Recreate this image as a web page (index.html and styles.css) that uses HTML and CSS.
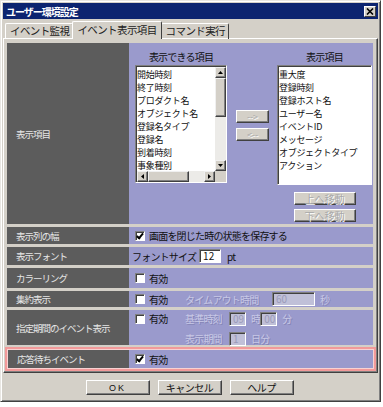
FILE: index.html
```html
<!DOCTYPE html>
<html>
<head lang="ja">
    <meta charset="UTF-8">
    <title>ユーザー環境設定</title>
    <link rel="stylesheet" href="styles.css">
</head>
<body>
<div class="window">
    <div class="titlebar">
        <span class="title">ユーザー環境設定</span>
        <span class="close">
            <svg width="8" height="7" viewBox="0 0 8 7"><path d="M1 0.5 L7 6.5 M7 0.5 L1 6.5" stroke="#000" stroke-width="1.6"/></svg>
        </span>
    </div>
    <ul class="tabs">
        <li>イベント監視</li>
        <li class="selected">イベント表示項目</li>
        <li>コマンド実行</li>
    </ul>
    <div class="panel">
        <div class="grid">
            <div class="label">表示項目</div>
            <div class="value items">
                <div class="col col-left">
                    <div class="head">表示できる項目</div>
                    <div class="listbox scroll">
                        <ul class="list">
                            <li>開始時刻</li>
                            <li>終了時刻</li>
                            <li>プロダクト名</li>
                            <li>オブジェクト名</li>
                            <li>登録名タイプ</li>
                            <li>登録名</li>
                            <li>到着時刻</li>
                            <li>事象種別</li>
                        </ul>
                        <div class="vbar">
                            <span class="arrow"><svg width="5" height="3" viewBox="0 0 5 3"><path d="M2.5 0 L5 3 L0 3Z"/></svg></span>
                            <span class="thumb"></span>
                            <span class="track"></span>
                            <span class="arrow"><svg width="5" height="3" viewBox="0 0 5 3"><path d="M0 0 L5 0 L2.5 3Z"/></svg></span>
                        </div>
                        <div class="hbar">
                            <span class="arrow"><svg width="3" height="5" viewBox="0 0 3 5"><path d="M0 2.5 L3 0 L3 5Z"/></svg></span>
                            <span class="thumb"></span>
                            <span class="track"></span>
                            <span class="arrow"><svg width="3" height="5" viewBox="0 0 3 5"><path d="M0 0 L3 2.5 L0 5Z"/></svg></span>
                        </div>
                        <div class="corner"></div>
                    </div>
                </div>
                <div class="col col-mid">
                    <span class="btn off">--&gt;</span>
                    <span class="btn off">&lt;--</span>
                </div>
                <div class="col col-right">
                    <div class="head">表示項目</div>
                    <div class="listbox">
                        <ul class="list">
                            <li>重大度</li>
                            <li>登録時刻</li>
                            <li>登録ホスト名</li>
                            <li>ユーザー名</li>
                            <li>イベントID</li>
                            <li>メッセージ</li>
                            <li>オブジェクトタイプ</li>
                            <li>アクション</li>
                        </ul>
                    </div>
                    <span class="btn off move">上へ移動</span>
                    <span class="btn off move">下へ移動</span>
                </div>
            </div>

            <div class="label">表示列の幅</div>
            <div class="value"><span class="chk on"></span>画面を閉じた時の状態を保存する</div>

            <div class="label">表示フォント</div>
            <div class="value font">フォントサイズ<span class="input">12</span>pt</div>

            <div class="label">カラーリング</div>
            <div class="value"><span class="chk"></span>有効</div>

            <div class="label">集約表示</div>
            <div class="value">
                <span class="opt"><span class="chk"></span>有効</span>
                <span class="dim w-timeout">タイムアウト時間</span>
                <span class="input off wide">60</span>
                <span class="dim">秒</span>
            </div>

            <div class="label">指定期間のイベント表示</div>
            <div class="value period">
                <span class="opt"><span class="chk"></span>有効</span>
                <div class="lines">
                    <div class="line">
                        <span class="dim w-base">基準時刻</span>
                        <span class="input off">09</span>
                        <span class="dim">時</span>
                        <span class="input off">00</span>
                        <span class="dim">分</span>
                    </div>
                    <div class="line">
                        <span class="dim w-base">表示期間</span>
                        <span class="input off">1</span>
                        <span class="dim">日分</span>
                    </div>
                </div>
            </div>

            <div class="mark">
                <div class="label">応答待ちイベント</div>
                <div class="value"><span class="chk on"></span>有効</div>
            </div>
        </div>
    </div>
    <div class="buttons">
        <span class="btn ok">OK</span>
        <span class="btn">キャンセル</span>
        <span class="btn">ヘルプ</span>
    </div>
</div>
</body>
</html>
```

FILE: styles.css
```css
*{
    margin: 0;
    padding: 0;
    box-sizing: border-box;
}
ul{
    list-style: none;
}
body{
    background: #fff;
    font-family: "Noto Sans CJK JP", "Liberation Sans", sans-serif;
    font-size: 10px;
    color: #111;
}
.window{
    width: 381px;
    height: 402px;
    background: #d4d0c8;
    border: 1px solid;
    border-color: #e8e6e2 #404040 #404040 #e8e6e2;
    box-shadow: inset 1px 1px #fff, inset -1px -1px #808080;
    padding: 2px;
}
.titlebar{
    height: 16px;
    background: #0c2470;
    display: flex;
    align-items: center;
    justify-content: space-between;
    padding: 0 2px 0 3px;
}
.title{
    color: #fff;
    font-weight: bold;
    font-size: 10px;
    letter-spacing: -1px;
}
.close{
    width: 12px;
    height: 11px;
    background: #d4d0c8;
    border: 1px solid;
    border-color: #fff #404040 #404040 #fff;
    display: flex;
    align-items: center;
    justify-content: center;
}
.tabs{
    display: flex;
    align-items: flex-end;
    height: 19px;
    padding-left: 2px;
    margin-top: 1px;
}
.tabs li{
    height: 16px;
    line-height: 14px;
    padding: 0 3px 0 4px;
    border: 1px solid;
    border-bottom: none;
    border-color: #fff #404040 #404040 #fff;
    border-radius: 2px 2px 0 0;
    letter-spacing: -0.6px;
    font-size: 10.5px;
    color: #222;
}
.tabs li.selected{
    height: 18px;
    line-height: 16px;
    margin: 0 -1px;
    position: relative;
    z-index: 1;
    background: #d4d0c8;
    padding: 0 4px;
}
.panel{
    height: 335px;
    border: 1px solid;
    border-color: #fff #404040 #404040 #fff;
    box-shadow: inset -1px -1px #808080;
    padding: 4px 4px 3px 3px;
    margin-top: -1px;
}
.grid{
    display: grid;
    grid-template-columns: 122px 1fr;
    grid-template-rows: 181px 17px 18px 20px 16px 35px 23px;
    row-gap: 3px;
}
.label{
    background: #5c5c5c;
    color: #e6e6e6;
    display: flex;
    align-items: center;
    padding-left: 9px;
    font-size: 9.5px;
    letter-spacing: -1px;
}
.value{
    background: #9a9acc;
    display: flex;
    align-items: center;
    padding-left: 6px;
    letter-spacing: -0.8px;
}
.mark{
    grid-column: 1 / -1;
    display: grid;
    grid-template-columns: 121px 1fr;
    margin: -1px -3px 0 -2px;
    border: 2px solid #f29a9a;
    padding: 1px;
    background: #f7d2d2;
}

/* 表示項目 */
.items{
    align-items: flex-start;
    padding: 6px 0 0 6px;
}
.col{
    display: flex;
    flex-direction: column;
}
.col-left{
    width: 92px;
}
.col-mid{
    width: 33px;
    margin: 61px 8px 0 9px;
    gap: 5px;
}
.col-right{
    width: 95px;
    align-items: center;
}
.head{
    height: 16px;
    text-align: center;
    line-height: 16px;
    align-self: stretch;
}
.listbox{
    width: 100%;
    height: 120px;
    background: #fff;
    border: 1px solid;
    border-color: #808080 #fff #fff #808080;
    box-shadow: inset 1px 1px #404040;
    padding: 1px 0 0 1px;
    overflow: hidden;
}
.listbox.scroll{
    height: 118px;
    display: grid;
    grid-template-columns: 1fr 11px;
    grid-template-rows: 1fr 11px;
}
.list{
    overflow: hidden;
    padding-top: 1px;
}
.list li{
    height: 13px;
    line-height: 13px;
    font-size: 9px;
    letter-spacing: -0.3px;
    white-space: nowrap;
}
.vbar, .hbar{
    display: flex;
    background: #ecebe8;
}
.vbar{
    flex-direction: column;
}
.arrow, .thumb, .corner{
    background: #d4d0c8;
    border: 1px solid;
    border-color: #f0f0f0 #404040 #404040 #f0f0f0;
    box-shadow: inset -1px -1px #808080;
}
.arrow{
    width: 11px;
    height: 11px;
    flex: none;
    display: flex;
    align-items: center;
    justify-content: center;
}
.vbar .thumb{
    height: 39px;
}
.hbar .thumb{
    width: 41px;
}
.track{
    flex: 1;
}
.corner{
    border: none;
    box-shadow: none;
}
.btn{
    display: flex;
    align-items: center;
    justify-content: center;
    height: 14px;
    background: #d4d0c8;
    border: 1px solid;
    border-color: #fff #404040 #404040 #fff;
    box-shadow: inset -1px -1px #808080;
}
.btn.off{
    color: #a8a8a8;
    text-shadow: 1px 1px #fff;
    letter-spacing: 0;
}
.col-mid .btn{
    height: 13px;
    font-size: 9px;
}
.move{
    width: 62px;
    height: 13px;
    margin-top: 7px;
}
.move + .move{
    margin-top: 4px;
}

/* 入力 */
.chk{
    width: 10px;
    height: 10px;
    background: #fff;
    border: 1px solid;
    border-color: #808080 #fff #fff #808080;
    box-shadow: inset 1px 1px #404040;
    margin-right: 4px;
    flex: none;
    position: relative;
}
.chk.on::after{
    content: "";
    position: absolute;
    left: 2px;
    top: 0px;
    width: 2px;
    height: 5px;
    border: solid #000;
    border-width: 0 2px 2px 0;
    transform: rotate(40deg);
}
.input{
    width: 22px;
    height: 14px;
    background: #fff;
    border: 1px solid;
    border-color: #808080 #fff #fff #808080;
    box-shadow: inset 1px 1px #404040;
    padding-left: 3px;
    line-height: 12px;
    margin: 0 6px 0 3px;
    letter-spacing: 0;
}
.input.off{
    width: 17px;
    background: #c0c0d8;
    color: #9a9ab8;
    margin: 0 5px 0 0;
}
.input.wide{
    width: 43px;
}
.font{
    padding-left: 3px;
}
.opt{
    display: flex;
    align-items: center;
    width: 50px;
}
.dim{
    color: #c8c8e6;
    text-shadow: 1px 1px rgba(110, 110, 160, 0.5);
}
.w-timeout{
    width: 87px;
}
.w-base{
    width: 44px;
}
.period{
    align-items: flex-start;
    padding-top: 1px;
}
.period .opt{
    height: 15px;
}
.lines{
    display: flex;
    flex-direction: column;
    gap: 5px;
}
.line{
    display: flex;
    align-items: center;
}

.buttons{
    display: flex;
    justify-content: center;
    gap: 8px;
    margin-top: 7px;
    padding-right: 2px;
}
.buttons .btn{
    width: 64px;
    height: 15px;
    font-size: 10px;
    letter-spacing: -0.5px;
}
.buttons .ok{
    letter-spacing: 2px;
    font-family: "Liberation Sans", sans-serif;
    font-size: 9px;
}
```
